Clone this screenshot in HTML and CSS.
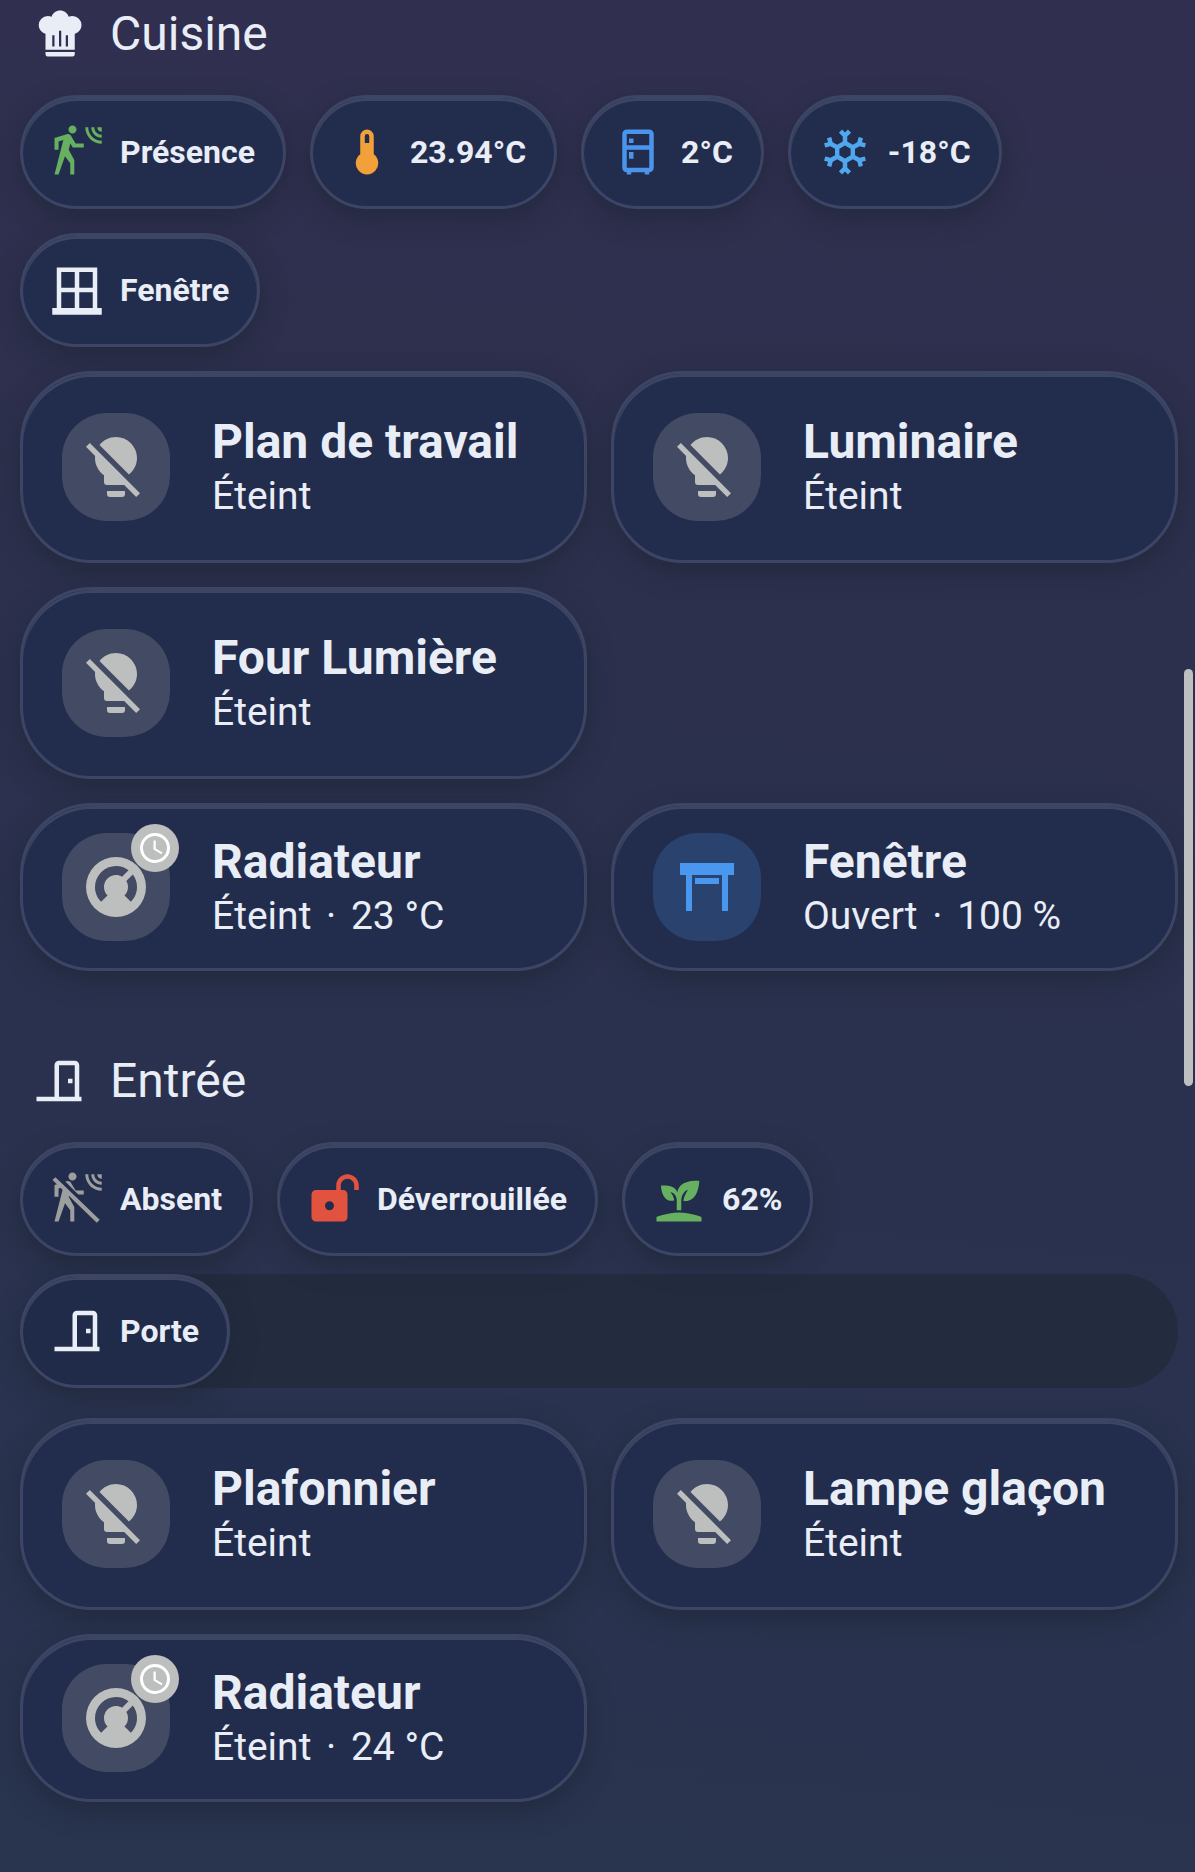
FILE: index.html
```html
<!DOCTYPE html>
<html lang="fr">
<head>
    <meta charset="UTF-8">
    <meta name="viewport" content="width=device-width, initial-scale=1.0">
    <title>Maison</title>
    <link rel="stylesheet" href="styles.css">
</head>
<body>
    <!-- Shared icons -->
    <svg class="sprite" aria-hidden="true">
        <symbol id="bulb-off" viewBox="0 0 24 24"><path d="M12,2C9.76,2 7.78,3.05 6.5,4.68L16.31,14.5C17.94,13.21 19,11.24 19,9A7,7 0 0,0 12,2M3.28,4L2,5.27L5.04,8.3C5,8.53 5,8.76 5,9C5,11.38 6.19,13.47 8,14.74V17A1,1 0 0,0 9,18H14.73L18.73,22L20,20.72L3.28,4M9,20V21A1,1 0 0,0 10,22H14A1,1 0 0,0 15,21V20H9Z"/></symbol>
        <symbol id="door" viewBox="0 0 24 24"><path d="M16,11H18V13H16V11M12,3H19C20.11,3 21,3.89 21,5V19H22V21H2V19H10V5C10,3.89 10.89,3 12,3M12,5V19H19V5H12Z"/></symbol>
        <symbol id="thermostat" viewBox="0 0 24 24"><path fill-rule="evenodd" d="M16.95,16.95L14.83,14.83C15.55,14.1 16,13.1 16,12C16,11.26 15.79,10.57 15.43,10L17.6,7.81C18.5,9 19,10.43 19,12C19,13.93 18.22,15.68 16.95,16.95M12,5C13.57,5 15,5.5 16.19,6.4L14,8.56C13.43,8.21 12.74,8 12,8A4,4 0 0,0 8,12C8,13.1 8.45,14.1 9.17,14.83L7.05,16.95C5.78,15.68 5,13.93 5,12A7,7 0 0,1 12,5M12,2A10,10 0 0,0 2,12A10,10 0 0,0 12,22A10,10 0 0,0 22,12A10,10 0 0,0 12,2Z"/></symbol>
        <symbol id="clock" viewBox="0 0 24 24"><path d="M12,20A8,8 0 0,0 20,12A8,8 0 0,0 12,4A8,8 0 0,0 4,12A8,8 0 0,0 12,20M12,2A10,10 0 0,1 22,12A10,10 0 0,1 12,22C6.47,22 2,17.5 2,12A10,10 0 0,1 12,2M12.5,7V12.25L17,14.92L16.25,16.15L11,13V7H12.5Z"/></symbol>
        <symbol id="walker" viewBox="0 0 24 24"><path d="M10,0.2C9,0.2 8.2,1 8.2,2C8.2,3 9,3.8 10,3.8C11,3.8 11.8,3 11.8,2C11.8,1 11,0.2 10,0.2M15.67,1A7.33,7.33 0 0,0 23,8.33V7A6,6 0 0,1 17,1H15.67M18.33,1C18.33,3.58 20.42,5.67 23,5.67V4.33C21.16,4.33 19.67,2.84 19.67,1H18.33M21,1A2,2 0 0,0 23,3V1H21M7.92,4.03C7.75,4.03 7.58,4.06 7.42,4.11L2,5.8V11H3.8V7.33L5.91,6.67L2,22H3.8L6.67,13.89L9,17V22H10.8V15.59L8.31,11.05L9.04,8.18L10.12,10H15V8.2H11.38L9.38,4.87C9.08,4.37 8.54,4.03 7.92,4.03Z"/></symbol>
    </svg>

    <main class="dashboard">
        <section class="room">
            <h2 class="room-title">
                <svg class="icon" viewBox="0 0 24 24"><path fill-rule="evenodd" d="M12.5,1.5C10.73,1.5 9.17,2.67 8.67,4.37C8.14,4.13 7.58,4 7,4A4,4 0 0,0 3,8C3,9.82 4.24,11.41 6,11.87V19H19V11.87C20.76,11.41 22,9.82 22,8A4,4 0 0,0 18,4C17.42,4 16.86,4.13 16.33,4.37C15.83,2.67 14.27,1.5 12.5,1.5M12,10.5H13V17.5H12V10.5M9,12.5H10V17.5H9V12.5M15,12.5H16V17.5H15V12.5M6,20V21A1,1 0 0,0 7,22H18A1,1 0 0,0 19,21V20H6Z"/></svg>
                Cuisine
            </h2>
            <div class="chips">
                <button class="chip">
                    <svg class="icon green"><use href="#walker"/></svg>
                    Présence
                </button>
                <button class="chip">
                    <svg class="icon orange" viewBox="0 0 24 24"><path fill-rule="evenodd" d="M15 13V5A3 3 0 0 0 9 5V13A5 5 0 1 0 15 13M12 4A1 1 0 0 1 13 5V8H11V5A1 1 0 0 1 12 4Z"/></svg>
                    23.94°C
                </button>
                <button class="chip">
                    <svg class="icon blue" viewBox="0 0 24 24"><path fill-rule="evenodd" d="M9,21V22H7V21A2,2 0 0,1 5,19V4A2,2 0 0,1 7,2H17A2,2 0 0,1 19,4V19A2,2 0 0,1 17,21V22H15V21H9M7,4V9H17V4H7M7,19H17V11H7V19M8,12H10V15H8V12M8,6H10V8H8V6Z"/></svg>
                    2°C
                </button>
                <button class="chip">
                    <svg class="icon sky" viewBox="0 0 24 24"><path fill-rule="evenodd" d="M20.79,13.95L18.46,14.57L16.46,13.44V10.56L18.46,9.43L20.79,10.05L21.31,8.12L19.54,7.65L20,5.88L18.07,5.36L17.45,7.69L15.45,8.82L13,7.38V5.12L14.71,3.41L13.29,2L12,3.29L10.71,2L9.29,3.41L11,5.12V7.38L8.5,8.82L6.5,7.69L5.92,5.36L4,5.88L4.47,7.65L2.7,8.12L3.22,10.05L5.55,9.43L7.55,10.56V13.45L5.55,14.58L3.22,13.96L2.7,15.89L4.47,16.36L4,18.12L5.93,18.64L6.55,16.31L8.55,15.18L11,16.62V18.88L9.29,20.59L10.71,22L12,20.71L13.29,22L14.7,20.59L13,18.88V16.62L15.5,15.17L17.5,16.3L18.12,18.63L20,18.12L19.53,16.35L21.3,15.88L20.79,13.95M9.5,10.56L12,9.11L14.5,10.56V13.44L12,14.89L9.5,13.44V10.56Z"/></svg>
                    -18°C
                </button>
                <button class="chip">
                    <svg class="icon" viewBox="0 0 24 24"><path fill-rule="evenodd" d="M21 20V2H3V20H1V23H23V20H21M19 4V11H13V4H19M5 4H11V11H5V4M5 20V13H11V20H5M13 20V13H19V20H13Z"/></svg>
                    Fenêtre
                </button>
            </div>
            <div class="cards">
                <button class="card">
                    <span class="shape"><svg class="shape-icon"><use href="#bulb-off"/></svg></span>
                    <span class="info">
                        <span class="name">Plan de travail</span>
                        <span class="state">Éteint</span>
                    </span>
                </button>
                <button class="card">
                    <span class="shape"><svg class="shape-icon"><use href="#bulb-off"/></svg></span>
                    <span class="info">
                        <span class="name">Luminaire</span>
                        <span class="state">Éteint</span>
                    </span>
                </button>
                <button class="card new-row">
                    <span class="shape"><svg class="shape-icon"><use href="#bulb-off"/></svg></span>
                    <span class="info">
                        <span class="name">Four Lumière</span>
                        <span class="state">Éteint</span>
                    </span>
                </button>
                <button class="card compact new-row">
                    <span class="shape">
                        <svg class="shape-icon"><use href="#thermostat"/></svg>
                        <span class="badge"><svg class="badge-icon"><use href="#clock"/></svg></span>
                    </span>
                    <span class="info">
                        <span class="name">Radiateur</span>
                        <span class="state">Éteint <span class="dot">·</span> 23 °C</span>
                    </span>
                </button>
                <button class="card compact">
                    <span class="shape open"><svg class="shape-icon" viewBox="0 0 24 24"><path d="M3 4H21V8H19V20H17V8H7V20H5V8H3V4M8 9H16V11H8V9Z"/></svg></span>
                    <span class="info">
                        <span class="name">Fenêtre</span>
                        <span class="state">Ouvert <span class="dot">·</span> 100 %</span>
                    </span>
                </button>
            </div>
        </section>

        <section class="room">
            <h2 class="room-title">
                <svg class="icon"><use href="#door"/></svg>
                Entrée
            </h2>
            <div class="chips">
                <button class="chip">
                    <svg class="icon grey" viewBox="0 0 24 24">
                        <mask id="slash">
                            <rect width="24" height="24" fill="#fff"/>
                            <path d="M2.5,1.2L23,21.7" stroke="#000" stroke-width="1.8"/>
                        </mask>
                        <g mask="url(#slash)"><use href="#walker"/></g>
                        <path d="M1.1,3.6L2.4,2.3L22.1,21.2L20.8,22.5Z"/>
                    </svg>
                    Absent
                </button>
                <button class="chip">
                    <svg class="icon red" viewBox="0 0 24 24"><path fill-rule="evenodd" d="M18 1C15.24 1 13 3.24 13 6V8H4C2.9 8 2 8.89 2 10V20C2 21.11 2.9 22 4 22H16C17.11 22 18 21.11 18 20V10C18 8.9 17.11 8 16 8H15V6C15 4.34 16.34 3 18 3C19.66 3 21 4.34 21 6V8H23V6C23 3.24 20.76 1 18 1M10 13C11.1 13 12 13.89 12 15C12 16.11 11.11 17 10 17C8.9 17 8 16.11 8 15C8 13.9 8.9 13 10 13Z"/></svg>
                    Déverrouillée
                </button>
                <button class="chip">
                    <svg class="icon green" viewBox="0 0 24 24"><path d="M2,22V20C2,20 7,18 12,18C17,18 22,20 22,20V22H2M11.3,9.1C10.1,5.2 4,6.1 4,6.1C4,6.1 4.2,13.9 9.9,12.7C9.5,9.8 8,9 8,9C10.8,9 11,12.4 11,12.4V17C11.3,17 11.7,17 12,17C12.3,17 12.7,17 13,17V12.8C13,12.8 13,8.9 16,7.9C16,7.9 14,10.9 14,12.9C21,13.6 21,4 21,4C21,4 12.1,3 11.3,9.1Z"/></svg>
                    62%
                </button>
            </div>
            <div class="chips chips-bar">
                <button class="chip">
                    <svg class="icon"><use href="#door"/></svg>
                    Porte
                </button>
            </div>
            <div class="cards">
                <button class="card">
                    <span class="shape"><svg class="shape-icon"><use href="#bulb-off"/></svg></span>
                    <span class="info">
                        <span class="name">Plafonnier</span>
                        <span class="state">Éteint</span>
                    </span>
                </button>
                <button class="card">
                    <span class="shape"><svg class="shape-icon"><use href="#bulb-off"/></svg></span>
                    <span class="info">
                        <span class="name">Lampe glaçon</span>
                        <span class="state">Éteint</span>
                    </span>
                </button>
                <button class="card compact">
                    <span class="shape">
                        <svg class="shape-icon"><use href="#thermostat"/></svg>
                        <span class="badge"><svg class="badge-icon"><use href="#clock"/></svg></span>
                    </span>
                    <span class="info">
                        <span class="name">Radiateur</span>
                        <span class="state">Éteint <span class="dot">·</span> 24 °C</span>
                    </span>
                </button>
            </div>
        </section>
    </main>
    <div class="scroll-thumb"></div>
</body>
</html>
```

FILE: styles.css
```css
* {
    box-sizing: border-box;
}

body {
    margin: 0;
    min-height: 100vh;
    font-family: Roboto, sans-serif;
    color: #e9edf6;
    background: linear-gradient(186deg, #312f50 0%, #2d304d 30%, #2a314e 55%, #29344f 100%);
}

.sprite {
    display: none;
}

.dashboard {
    padding: 4px 17px 70px 20px;
}

.room + .room {
    margin-top: 80px;
}

.room-title {
    display: flex;
    align-items: center;
    gap: 24px;
    margin: 0 0 31px;
    padding-left: 12px;
    font-size: 48px;
    font-weight: 400;
    line-height: 60px;
}

.icon {
    width: 54px;
    height: 54px;
    flex-shrink: 0;
    fill: currentColor;
}

.green { color: #66b060; }
.orange { color: #f2a03a; }
.blue { color: #4a94ec; }
.sky { color: #4fa8ee; }
.red { color: #e2533f; }
.grey { color: #9d9f9f; }

.chips {
    display: flex;
    flex-wrap: wrap;
    gap: 24px;
    margin-bottom: 24px;
}

.chips:has(+ .chips-bar) {
    margin-bottom: 18px;
}

.chips-bar {
    margin-bottom: 30px;
    border-radius: 57px;
    background: #232c3f;
}

.chip,
.card {
    font-family: inherit;
    color: inherit;
    border: 3px solid #3d4564;
    background: #222c4d;
    box-shadow: inset 0 3px 0 #3d4564, 0 9px 24px rgba(28, 36, 52, 0.6);
    cursor: pointer;
}

.chip {
    display: flex;
    align-items: center;
    gap: 16px;
    height: 114px;
    padding: 0 28px 0 27px;
    border-radius: 57px;
    font-size: 32px;
    font-weight: 700;
}

.chips-bar .chip {
    background: #1f2b49;
}

.cards {
    display: grid;
    grid-template-columns: 1fr 1fr;
    gap: 24px;
}

.card {
    display: flex;
    align-items: center;
    gap: 42px;
    padding: 39px;
    border-radius: 72px;
    text-align: left;
}

.card.compact {
    padding: 27px 39px;
}

.new-row {
    grid-column-start: 1;
}

.shape {
    position: relative;
    display: flex;
    align-items: center;
    justify-content: center;
    flex-shrink: 0;
    width: 108px;
    height: 108px;
    border-radius: 45px;
    color: #bdbebe;
    background: #434a64;
}

.shape.open {
    color: #4a97f0;
    background: #29426e;
}

.shape-icon {
    width: 72px;
    height: 72px;
    fill: currentColor;
}

.badge {
    position: absolute;
    top: -9px;
    right: -9px;
    display: flex;
    align-items: center;
    justify-content: center;
    width: 48px;
    height: 48px;
    border-radius: 50%;
    color: #fff;
    background: #bdbebe;
}

.badge-icon {
    width: 36px;
    height: 36px;
    fill: currentColor;
}

.info {
    display: flex;
    flex-direction: column;
    min-width: 0;
}

.name {
    font-size: 48px;
    font-weight: 700;
    line-height: 58px;
}

.state {
    font-size: 39px;
    line-height: 50px;
}

.dot {
    padding: 0 5px;
}

.scroll-thumb {
    position: fixed;
    top: 669px;
    right: 2px;
    width: 9px;
    height: 417px;
    border-radius: 5px;
    background: #bdbfc0;
}
```
